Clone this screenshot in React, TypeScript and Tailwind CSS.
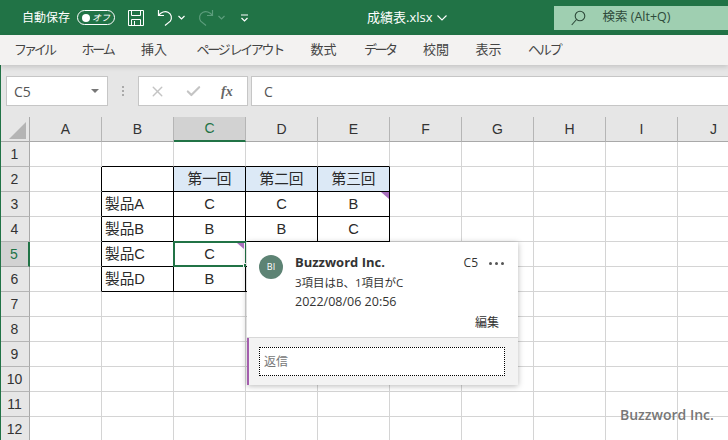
import { Check, X } from "lucide-react";

const COLS = ["A", "B", "C", "D", "E", "F", "G", "H", "I", "J"];
const ROWS = [1, 2, 3, 4, 5, 6, 7, 8, 9, 10, 11, 12];
const TABS = [
  { label: "ファイル", cls: "tracking-[-3px]" },
  { label: "ホーム", cls: "tracking-[-2.2px]" },
  { label: "挿入", cls: "" },
  { label: "ページ レイアウト", cls: "ml-[2px] tracking-[-2.3px]" },
  { label: "数式", cls: "" },
  { label: "データ", cls: "tracking-[-2.5px]" },
  { label: "校閲", cls: "mr-[-1px]" },
  { label: "表示", cls: "mr-[-1px]" },
  { label: "ヘルプ", cls: "tracking-[-2.2px]" },
];

const CELLS: Record<string, string> = {
  C2: "第一回", D2: "第二回", E2: "第三回",
  B3: "製品A", C3: "C", D3: "C", E3: "B",
  B4: "製品B", C4: "B", D4: "B", E4: "C",
  B5: "製品C", C5: "C",
  B6: "製品D", C6: "B",
};

function cellClass(col: string, row: number) {
  const rightBlack = row >= 2 && row <= 6 && "ABCDE".includes(col);
  const bottomBlack = row >= 1 && row <= 6 && "BCDE".includes(col);
  const header = row === 2 && "CDE".includes(col);
  return [
    "relative h-[25px] border-r border-b flex items-center text-[14.67px] text-[#2a2a2a]",
    rightBlack ? "border-r-black" : "border-r-[#d4d4d4]",
    bottomBlack ? "border-b-black" : "border-b-[#d4d4d4]",
    header ? "bg-[#dce9f6]" : "bg-white",
    col === "B" ? "justify-start pl-[3px]" : "justify-center",
  ].join(" ");
}

function Marker({ inset }: { inset?: boolean }) {
  return (
    <span
      className={
        inset
          ? "absolute z-10 top-[1px] right-[1px] w-0 h-0 border-t-[6px] border-l-[7px] border-t-[#a86fbd] border-l-transparent"
          : "absolute top-0 right-0 w-0 h-0 border-t-[7px] border-l-[8px] border-t-[#a86fbd] border-l-transparent"
      }
    />
  );
}

function TitleBar() {
  return (
    <div className="h-[35px] bg-[#217346] flex items-center text-white text-[12px] shrink-0">
      <span className="ml-[22px] w-[48px]">自動保存</span>
      <div className="ml-[7px] w-[38px] h-[15px] rounded-full border border-white flex items-center px-[4px] justify-between">
        <span className="w-[8px] h-[8px] rounded-full bg-white" />
        <span className="text-[9px] italic leading-none">オフ</span>
      </div>
      <svg className="ml-[13px]" width="16" height="16" viewBox="0 0 16 16" fill="none" stroke="#fff" strokeWidth="1">
        <path d="M0.5 0.5h15v15h-15z" />
        <path d="M3.5 0.5v5h9v-5M3.5 15.5v-6h9v6M6.5 11v4.5" />
      </svg>
      <svg className="ml-[13px]" width="17" height="17" viewBox="0 0 17 17" fill="none" stroke="#fff" strokeWidth="1.2">
        <path d="M1.5 1v5.5H7" />
        <path d="M1.8 6.2C4 3 8 1.8 11 3.2c3.6 1.7 4.3 6 2.3 9L8 16.5" />
      </svg>
      <svg className="ml-[4px]" width="7" height="5" viewBox="0 0 7 5" fill="none" stroke="#fff" strokeWidth="1.2">
        <path d="M0.5 1l3 3 3-3" />
      </svg>
      <svg className="ml-[12px]" width="17" height="17" viewBox="0 0 17 17" fill="none" stroke="#5c9d7c" strokeWidth="1.2">
        <path d="M15.5 1v5.5H10" />
        <path d="M15.2 6.2C13 3 9 1.8 6 3.2c-3.6 1.7-4.3 6-2.3 9L9 16.5" />
      </svg>
      <svg className="ml-[4px]" width="7" height="5" viewBox="0 0 7 5" fill="none" stroke="#5c9d7c" strokeWidth="1.2">
        <path d="M0.5 1l3 3 3-3" />
      </svg>
      <svg className="ml-[16px]" width="7" height="8" viewBox="0 0 7 8" fill="none" stroke="#fff" strokeWidth="1.2">
        <path d="M0 1h7M0.5 4l3 3 3-3" />
      </svg>
      <div className="ml-[119px] flex items-center gap-[4px] text-[13px]">
        <span>成績表.xlsx</span>
        <svg width="10" height="6" viewBox="0 0 10 6" fill="none" stroke="#fff" strokeWidth="1.1">
          <path d="M0.5 0.5l4.500 4.500 4.500-4.500" />
        </svg>
      </div>
      <div className="ml-[107px] flex-1 h-[24px] bg-[#9fcfb1] flex items-center pl-[17px] text-[#2e4a3a] text-[12.5px]">
        <svg width="15" height="16" viewBox="0 0 15 16" fill="none" stroke="#2e4a3a" strokeWidth="1.1">
          <circle cx="9" cy="6" r="4.8" />
          <path d="M5.5 9.5L0.7 15" />
        </svg>
        <span className="ml-[17px]">検索 (Alt+Q)</span>
      </div>
    </div>
  );
}

function FormulaBar() {
  return (
    <div className="h-[52px] bg-[#e6e6e6] flex items-start pt-[11px] pl-[6px] shrink-0 text-[#555]">
      <div className="w-[102px] h-[30px] bg-white border border-[#c6c6c6] flex items-center justify-between pl-[7px] pr-[8px] text-[14px]">
        <span className="pt-[1px]">C5</span>
        <span className="w-0 h-0 border-x-[4px] border-x-transparent border-t-[4px] border-t-[#777]" />
      </div>
      <div className="w-[30px] h-[30px] flex flex-col items-center justify-center gap-[2px]">
        <span className="w-[2px] h-[2px] bg-[#aaa]" />
        <span className="w-[2px] h-[2px] bg-[#aaa]" />
        <span className="w-[2px] h-[2px] bg-[#aaa]" />
      </div>
      <div className="w-[110px] h-[30px] bg-white border border-[#c6c6c6] flex items-center pl-[10px]">
        <X size={17} strokeWidth={2} className="text-[#c4c4c4]" />
        <Check size={17} strokeWidth={3} className="ml-[19px] text-[#c4c4c4]" />
        <span className="ml-[19px] text-[14px] italic font-bold text-[#666] font-['Liberation_Serif',serif]">fx</span>
      </div>
      <div className="ml-[3px] flex-1 h-[30px] bg-white border-y border-l border-[#c6c6c6] flex items-center pl-[12px] text-[14px]">C</div>
    </div>
  );
}

function Sheet() {
  return (
    <div className="grid grid-cols-[30px_repeat(10,72px)] auto-rows-[25px] font-['Liberation_Sans','Noto_Sans_CJK_JP',sans-serif]">
      <div className="relative h-[25px] bg-[#e6e6e6] border-r border-b border-[#a9a9a9]">
        <svg className="absolute left-[9px] top-[5px]" width="17" height="17" viewBox="0 0 17 17">
          <path d="M17 0v17H0z" fill="#b4b4b4" />
        </svg>
      </div>
      {COLS.map((c) => (
        <div
          key={c}
          className={
            c === "C"
              ? "h-[25px] bg-[#d2d2d2] border-b-2 border-b-[#217346] border-r border-r-[#b5b5b5] flex items-center justify-center text-[14px] text-[#217346]"
              : "h-[25px] bg-[#e6e6e6] border-b border-b-[#a9a9a9] border-r border-r-[#b5b5b5] flex items-center justify-center text-[14px] text-[#333]"
          }
        >
          {c}
        </div>
      ))}
      {ROWS.map((r) => (
        <div key={r} className="contents">
          <div
            className={
              r === 5
                ? "h-[25px] bg-[#d2d2d2] border-r-2 border-r-[#217346] border-b border-b-[#a9a9a9] flex items-center justify-center text-[14px] text-[#217346]"
                : "h-[25px] bg-[#e6e6e6] border-r border-r-[#a9a9a9] border-b border-b-[#b5b5b5] flex items-center justify-center text-[14px] text-[#333]"
            }
          >
            {r}
          </div>
          {COLS.map((c) => (
            <div key={c} className={cellClass(c, r)}>
              {CELLS[c + r]}
              {c + r === "E3" && <Marker />}
              {c + r === "C5" && <Marker inset />}
              {c + r === "C5" && (
                <span className="absolute -left-px -top-px w-[74px] h-[26px] border-2 border-[#217346]">
                  <span className="absolute -right-[3px] -bottom-[3px] w-[5px] h-[5px] bg-[#217346] border border-white" />
                </span>
              )}
            </div>
          ))}
        </div>
      ))}
    </div>
  );
}

function CommentCard() {
  return (
    <div className="absolute left-[247px] top-[242px] w-[271px] h-[143px] bg-white shadow-[0_1px_6px_rgba(0,0,0,0.28)] flex flex-col font-['Open_Sans','Noto_Sans_CJK_JP',sans-serif] text-[#333]">
      <div className="h-[96px] shrink-0 border-b border-[#d8d8d8] relative pl-[48px] pt-[13px]">
        <div className="absolute left-[12px] top-[13px] w-[24px] h-[24px] rounded-full bg-[#5d8374] text-white text-[9px] flex items-center justify-center">BI</div>
        <div className="flex items-center h-[16px] pr-[14px]">
          <span className="text-[13px] font-bold">Buzzword Inc.</span>
          <span className="ml-auto text-[12px]">C5</span>
          <span className="ml-[11px] flex gap-[3px]">
            <span className="w-[3px] h-[3px] rounded-full bg-[#555]" />
            <span className="w-[3px] h-[3px] rounded-full bg-[#555]" />
            <span className="w-[3px] h-[3px] rounded-full bg-[#555]" />
          </span>
        </div>
        <p className="mt-[2px] text-[11.5px] leading-[19px]">3項目はB、1項目がC</p>
        <p className="text-[12.5px] leading-[19px]">2022/08/06 20:56</p>
        <p className="text-right pr-[19px] mt-[3px] text-[12px] leading-[18px]">編集</p>
      </div>
      <div className="flex-1 bg-[#f3f3f3] border-l-2 border-l-[#a45fae] pl-[10px] pt-[9px]">
        <div className="w-[246px] h-[29px] bg-white border border-dotted border-black flex items-center pl-[4px] text-[12px] text-[#777]">返信</div>
      </div>
    </div>
  );
}

export default function App() {
  return (
    <div className="relative w-[728px] h-[440px] overflow-hidden bg-white flex flex-col font-['Open_Sans','Noto_Sans_CJK_JP',sans-serif]">
      <TitleBar />
      <div className="h-[30px] bg-[#f3f2f1] flex items-center gap-[27.5px] pl-[14px] text-[13px] text-[#444] shrink-0 shadow-[0_2px_5px_rgba(0,0,0,0.15)] z-10">
        {TABS.map((t) => (
          <span key={t.label} className={t.cls}>{t.label}</span>
        ))}
      </div>
      <FormulaBar />
      <Sheet />
      <CommentCard />
      <span className="absolute left-[620px] top-[404px] text-[14px] font-semibold text-[#777]">Buzzword Inc.</span>
      <div className="absolute left-0 top-[35px] bottom-0 w-px bg-[#217346]" />
    </div>
  );
}
